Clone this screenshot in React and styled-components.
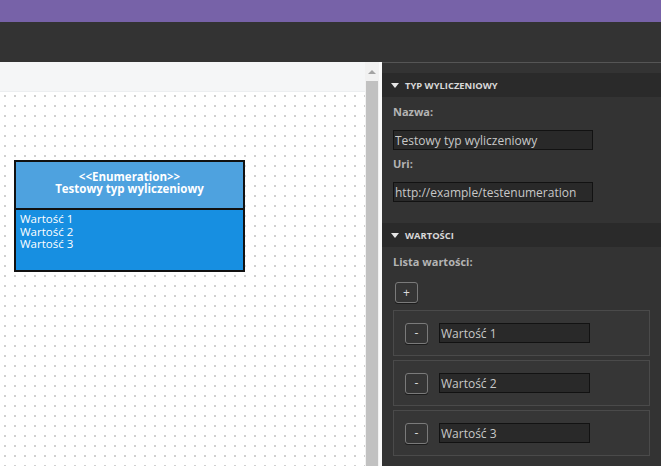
// Enumeration editor: diagram canvas on the left, properties panel on the right

import styled, { createGlobalStyle } from "styled-components";

const GlobalStyle = createGlobalStyle`
    html, body {
        margin: 0;
        padding: 0;
        background: #333;
    }
    * {
        box-sizing: border-box;
    }
`;

const values = ["Wartość 1", "Wartość 2", "Wartość 3"];

const App = () => {
    return (
        <Page>
            <GlobalStyle />
            <TopBar />
            <Toolbar />
            <Main>
                <CanvasArea>
                    <Ruler />
                    <Canvas>
                        <EnumBox>
                            <EnumHead>
                                <div>&lt;&lt;Enumeration&gt;&gt;</div>
                                <div>Testowy typ wyliczeniowy</div>
                            </EnumHead>
                            <EnumBody>
                                {values.map((v) => (
                                    <div key={v}>{v}</div>
                                ))}
                            </EnumBody>
                        </EnumBox>
                    </Canvas>
                </CanvasArea>
                <Scrollbar>
                    <ScrollArrow />
                    <ScrollThumb />
                </Scrollbar>
                <Panel>
                    <Section>
                        <SectionHead>
                            <Caret />
                            Typ wyliczeniowy
                        </SectionHead>
                        <SectionBody>
                            <Label>Nazwa:</Label>
                            <TextInput defaultValue="Testowy typ wyliczeniowy" />
                            <Label>Uri:</Label>
                            <TextInput defaultValue="http://example/testenumeration" />
                        </SectionBody>
                    </Section>
                    <Section>
                        <SectionHead>
                            <Caret />
                            Wartości
                        </SectionHead>
                        <SectionBody>
                            <Label>Lista wartości:</Label>
                            <SmallButton $add>+</SmallButton>
                            <ItemList>
                                {values.map((v) => (
                                    <Item key={v}>
                                        <SmallButton>-</SmallButton>
                                        <TextInput $narrow defaultValue={v} />
                                    </Item>
                                ))}
                            </ItemList>
                        </SectionBody>
                    </Section>
                </Panel>
            </Main>
        </Page>
    );
};
export default App;

const Page = styled.div`
    width: 661px;
    height: 466px;
    display: flex;
    flex-direction: column;
    overflow: hidden;
    font-family: "Open Sans", "DejaVu Sans", sans-serif;
`;

const TopBar = styled.div`
    height: 22px;
    background: #7762a8;
`;

const Toolbar = styled.div`
    height: 40px;
    background: #333333;
`;

const Main = styled.div`
    flex: 1;
    display: flex;
    min-height: 0;
`;

const CanvasArea = styled.div`
    width: 365px;
    display: flex;
    flex-direction: column;
    background: #ffffff;
`;

const Ruler = styled.div`
    height: 30px;
    background: #f5f6f7;
    border-bottom: 1px solid #eceef0;
`;

const Canvas = styled.div`
    position: relative;
    flex: 1;
    background-color: #ffffff;
    background-image: radial-gradient(circle, #cdcdcd 0.7px, transparent 0.8px);
    background-size: 10px 10px;
    background-position: 0px -1px;
`;

const EnumBox = styled.div`
    position: absolute;
    left: 14px;
    top: 68px;
    width: 231px;
    height: 112px;
    border: 2px solid #111;
    display: flex;
    flex-direction: column;
    font-family: "Open Sans", "DejaVu Sans", sans-serif;
    color: #fff;
    font-size: 11.5px;
`;

const EnumHead = styled.div`
    height: 48px;
    background: #4ea2df;
    border-bottom: 2px solid #111;
    display: flex;
    flex-direction: column;
    justify-content: center;
    align-items: center;
    font-weight: 700;
    line-height: 12.5px;
    padding-bottom: 4px;
`;

const EnumBody = styled.div`
    flex: 1;
    background: #178fe1;
    padding: 3px 4px 2px;
    line-height: 12.6px;
`;

const Scrollbar = styled.div`
    position: relative;
    width: 17px;
    background: #f1f1f1;
    border-right: 3px solid #fafafa;
`;

const ScrollArrow = styled.div`
    position: absolute;
    top: 8px;
    left: 3px;
    width: 0;
    height: 0;
    border-left: 4px solid transparent;
    border-right: 4px solid transparent;
    border-bottom: 4px solid #a3a3a3;
`;

const ScrollThumb = styled.div`
    position: absolute;
    top: 19px;
    bottom: 0;
    left: 1px;
    width: 12px;
    background: #c1c1c1;
`;

const Panel = styled.div`
    flex: 1;
    background: #333333;
    border-top: 1px solid #555;
    padding-top: 10px;
    display: flex;
    flex-direction: column;
`;

const Section = styled.div`
    display: flex;
    flex-direction: column;
`;

const SectionHead = styled.div`
    height: 24px;
    background: #2a2a2a;
    display: flex;
    align-items: center;
    gap: 6px;
    padding-left: 9px;
    font-size: 9.4px;
    font-weight: 700;
    text-transform: uppercase;
    color: #d8d8d8;
`;

const Caret = styled.span`
    width: 0;
    height: 0;
    border-left: 4px solid transparent;
    border-right: 4px solid transparent;
    border-top: 5px solid #e6e6e6;
`;

const SectionBody = styled.div`
    display: flex;
    flex-direction: column;
    align-items: flex-start;
    padding: 4px 11px 21px 11px;
`;

const Label = styled.div`
    font-size: 11px;
    font-weight: 700;
    color: #b4b4b4;
    height: 21px;
    line-height: 21px;
    margin-bottom: 8px;
    &:not(:first-child) {
        margin-top: 3px;
    }
`;

const TextInput = styled.input`
    width: ${(p) => (p.$narrow ? "151px" : "200px")};
    height: 20px;
    background: #292929;
    border: 1px solid #121212;
    color: #c8c8c8;
    font-family: "Open Sans", "DejaVu Sans", sans-serif;
    font-size: 12px;
    padding: 0 1px;
    outline: none;
    margin: 0;
`;

const SmallButton = styled.button`
    width: 23px;
    height: 21px;
    margin: ${(p) => (p.$add ? "2px 0 0 2px" : "0")};
    background: #353535;
    border: 1px solid #7a7a7a;
    border-radius: 3px;
    box-shadow: 0 1px 0 #1c1c1c;
    color: #dcdcdc;
    font-family: "Open Sans", "DejaVu Sans", sans-serif;
    font-size: 12px;
    line-height: 1;
    padding: 0;
`;

const ItemList = styled.div`
    margin-top: 7px;
    width: 257px;
    display: flex;
    flex-direction: column;
    gap: 4px;
`;

const Item = styled.div`
    height: 46px;
    background: #363636;
    border: 1px solid #4a4a4a;
    display: flex;
    align-items: center;
    gap: 11px;
    padding-left: 11px;
`;
